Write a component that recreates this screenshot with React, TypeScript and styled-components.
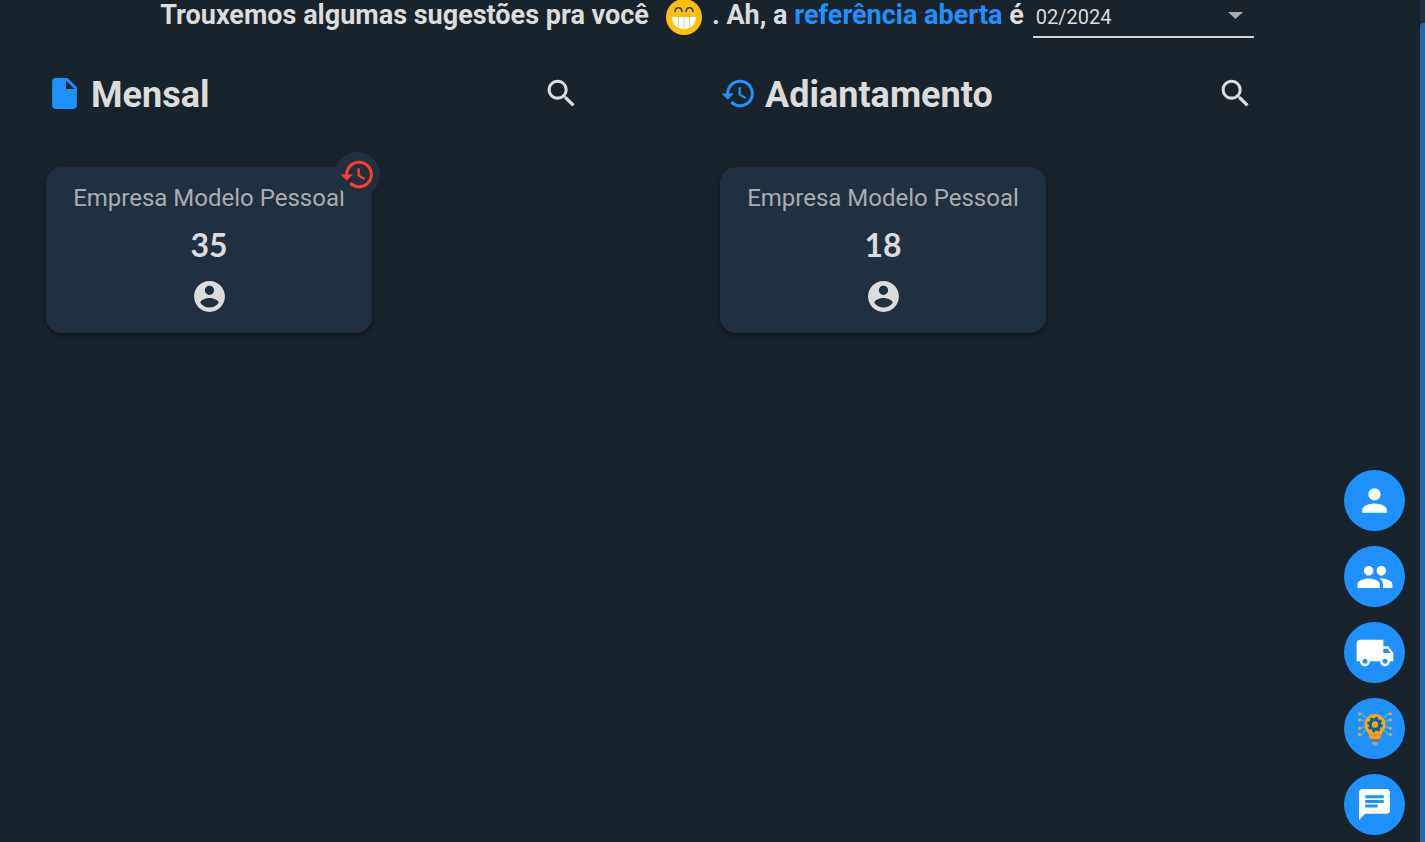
import React from 'react';
import styled, { createGlobalStyle } from 'styled-components';

const GlobalStyle = createGlobalStyle`
  *, *::before, *::after { box-sizing: border-box; }
  html, body { margin: 0; background: #19232b; }
  body { font-family: Roboto, sans-serif; color: #dcdcdc; overflow: hidden; }
  button { border: 0; padding: 0; font: inherit; cursor: pointer; }
`;

const Page = styled.div`
  min-height: 100vh;
  display: flex;
  justify-content: space-between;
`;

const Content = styled.main`
  flex: 1;
  padding: 0 36px;
`;

const ScrollTrack = styled.div`
  width: 5px;
  padding-top: 23px;
  background: #22303f;
  display: flex;
`;

const ScrollThumb = styled.div`
  flex: 1;
  border-radius: 4px 0 0 0;
  background: #2566a3;
`;

const Intro = styled.div`
  display: flex;
  justify-content: center;
  align-items: flex-start;
  gap: 9px;
  height: 38px;
  padding-left: 58px;
  padding-right: 64px;
`;

const Headline = styled.h1`
  margin: 0;
  display: flex;
  font-size: 27px;
  line-height: 30px;
  font-weight: 700;
  white-space: pre;
`;

const Accent = styled.a`
  color: #1e90ff;
  text-decoration: none;
`;

const Emoji = styled.svg`
  flex: none;
  width: 36px;
  height: 36px;
  margin: -1px 10px 0 17px;
`;

const SelectField = styled.label`
  position: relative;
  display: block;
  width: 221px;
  height: 38px;
  border-bottom: 2px solid #d0d3d4;
`;

const Select = styled.select`
  appearance: none;
  width: 100%;
  height: 34px;
  padding: 0 3px;
  border: 0;
  outline: 0;
  background: transparent;
  color: #dcdcdc;
  font: 400 20px/34px Roboto, sans-serif;
`;

const Caret = styled.svg`
  position: absolute;
  right: 11px;
  top: 12px;
  width: 15px;
  height: 7px;
  fill: #acacac;
  pointer-events: none;
`;

const Columns = styled.div`
  display: grid;
  grid-template-columns: 1fr 1fr;
  padding-top: 35px;
`;

const Column = styled.section`
  padding-left: 10px;
`;

const ColumnHeader = styled.header`
  display: flex;
  align-items: center;
  gap: 8px;
  height: 40px;
  margin-right: 130px;
`;

const ColumnTitle = styled.h2`
  flex: 1;
  margin: 0;
  padding-top: 4px;
  font-size: 36px;
  line-height: 40px;
  font-weight: 700;
`;

const IconButton = styled.button`
  display: flex;
  background: transparent;
  color: #dcdcdc;
`;

const Icon = styled.svg<{ $size?: number; $color?: string }>`
  display: block;
  flex: none;
  width: ${({ $size = 37 }) => $size}px;
  height: ${({ $size = 37 }) => $size}px;
  fill: ${({ $color = 'currentColor' }) => $color};
`;

const Card = styled.article`
  position: relative;
  width: 326px;
  height: 166px;
  margin-top: 54px;
  padding-top: 14px;
  display: flex;
  flex-direction: column;
  align-items: center;
  border-radius: 16px;
  background: #213040;
  box-shadow: 0 2px 4px rgba(0, 0, 0, 0.4);
`;

const Company = styled.h3`
  margin: 0;
  font-size: 24px;
  line-height: 34px;
  font-weight: 400;
  color: #acacac;
`;

const Count = styled.strong`
  margin: 8px 0 12px;
  font-family: Lato, sans-serif;
  font-size: 32px;
  line-height: 43px;
  font-weight: 700;
`;

const Badge = styled.span`
  position: absolute;
  right: -8px;
  top: -15px;
  width: 45px;
  height: 45px;
  display: flex;
  align-items: center;
  justify-content: center;
  border-radius: 50%;
  background: #213040;
`;

const Actions = styled.nav`
  position: fixed;
  right: 20px;
  bottom: 7px;
  display: flex;
  flex-direction: column;
  gap: 15px;
`;

const ActionButton = styled.button`
  width: 61px;
  height: 61px;
  display: flex;
  align-items: center;
  justify-content: center;
  border-radius: 50%;
  background: #1e90ff;
  color: #fff;
`;

const paths = {
  file: 'M6 2c-1.1 0-1.99.9-1.99 2L4 20c0 1.1.89 2 1.99 2H18c1.1 0 2-.9 2-2V8l-6-6H6zm7 7V3.5L18.5 9H13z',
  history:
    'M13 3c-4.97 0-9 4.03-9 9H1l3.89 3.89.07.14L9 12H6c0-3.87 3.13-7 7-7s7 3.13 7 7-3.13 7-7 7c-1.93 0-3.68-.79-4.94-2.06l-1.42 1.42C8.27 19.99 10.51 21 13 21c4.97 0 9-4.03 9-9s-4.03-9-9-9zm-1 5v5l4.28 2.54.72-1.21-3.5-2.08V8H12z',
  search:
    'M15.5 14h-.79l-.28-.27C15.41 12.59 16 11.11 16 9.5 16 5.91 13.09 3 9.5 3S3 5.91 3 9.5 5.91 16 9.5 16c1.61 0 3.09-.59 4.23-1.57l.27.28v.79l5 4.99L20.49 19l-4.99-5zm-6 0C7.01 14 5 11.99 5 9.5S7.01 5 9.5 5 14 7.01 14 9.5 11.99 14 9.5 14z',
  account:
    'M12 2C6.48 2 2 6.48 2 12s4.48 10 10 10 10-4.48 10-10S17.52 2 12 2zm0 3c1.66 0 3 1.34 3 3s-1.34 3-3 3-3-1.34-3-3 1.34-3 3-3zm0 14.2c-2.5 0-4.71-1.28-6-3.22.03-1.99 4-3.08 6-3.08 1.99 0 5.97 1.09 6 3.08-1.29 1.94-3.5 3.22-6 3.22z',
  person:
    'M12 12c2.21 0 4-1.79 4-4s-1.79-4-4-4-4 1.79-4 4 1.79 4 4 4zm0 2c-2.67 0-8 1.34-8 4v2h16v-2c0-2.66-5.33-4-8-4z',
  people:
    'M16 11c1.66 0 2.99-1.34 2.99-3S17.66 5 16 5c-1.66 0-3 1.34-3 3s1.34 3 3 3zm-8 0c1.66 0 2.99-1.34 2.99-3S9.66 5 8 5C6.34 5 5 6.34 5 8s1.34 3 3 3zm0 2c-2.33 0-7 1.17-7 3.5V19h14v-2.5c0-2.33-4.67-3.5-7-3.5zm8 0c-.29 0-.62.02-.97.05 1.16.84 1.97 1.97 1.97 3.45V19h6v-2.5c0-2.33-4.67-3.5-7-3.5z',
  truck:
    'M20 8h-3V4H3c-1.1 0-2 .9-2 2v11h2c0 1.66 1.34 3 3 3s3-1.34 3-3h6c0 1.66 1.34 3 3 3s3-1.34 3-3h2v-5l-3-4zM6 18.5c-.83 0-1.5-.67-1.5-1.5s.67-1.5 1.5-1.5 1.5.67 1.5 1.5-.67 1.5-1.5 1.5zm13.5-9l1.96 2.5H17V9.5h2.5zm-1.5 9c-.83 0-1.5-.67-1.5-1.5s.67-1.5 1.5-1.5 1.5.67 1.5 1.5-.67 1.5-1.5 1.5z',
  chat: 'M20 2H4c-1.1 0-1.99.9-1.99 2L2 22l4-4h14c1.1 0 2-.9 2-2V4c0-1.1-.9-2-2-2zM6 9h12v2H6V9zm8 5H6v-2h8v2zm4-6H6V6h12v2z',
};

type GlyphProps = { name: keyof typeof paths; size?: number; color?: string };

const Glyph = ({ name, size, color }: GlyphProps) => (
  <Icon viewBox="0 0 24 24" $size={size} $color={color} aria-hidden="true">
    <path d={paths[name]} />
  </Icon>
);

const Grin = () => (
  <Emoji viewBox="0 0 36 36" role="img" aria-label="sorriso">
    <circle cx="18" cy="18" r="18" fill="#fdbf10" />
    <path
      d="M9 12.500c.6-5 6.400-5 7 0M20 12.500c.6-5 6.400-5 7 0"
      fill="none"
      stroke="#3a3838"
      strokeWidth="1.500"
      strokeLinecap="round"
    />
    <path d="M6 18h24c0 7-5 12-12 12S6 25 6 18z" fill="#fff" />
    <path d="M12.500 18v10M18 18v12M23.500 18v10" stroke="#cfcfcf" strokeWidth="1" />
  </Emoji>
);

const sparks = [3, 9, 17.5, 23.5];

const IdeaBulb = () => (
  <Icon viewBox="0 0 36 36" $size={36} aria-hidden="true">
    <g fill="none" stroke="#5cb5c4" strokeWidth="1.400">
      <path d="M2 3h3l4 4M2 9h3l3 2M2 17h3l3-2M2 24h2l5-5M34 3h-3l-4 4M34 9h-3l-3 2M34 17h-3l-3-2M34 24h-2l-5-5" />
    </g>
    <g fill="#f9a825">
      {sparks.map((y) => (
        <g key={y}>
          <circle cx="2.500" cy={y} r="1.400" />
          <circle cx="33.500" cy={y} r="1.400" />
        </g>
      ))}
      <path d="M18 3C12 3 7.500 7.600 7.500 13.500c0 6.500 5 8 5.500 14.500h10c.5-6.500 5.500-8 5.500-14.500C28.500 7.600 24 3 18 3z" />
    </g>
    <path d="M11.500 22h13l-1.500 6H13z" fill="#f59a14" />
    <circle cx="18" cy="13.500" r="4.800" fill="none" stroke="#14618c" strokeWidth="3.200" />
    <circle cx="18" cy="13.500" r="6.800" fill="none" stroke="#14618c" strokeWidth="2" strokeDasharray="2.670 2.670" />
    <path d="M14 28h8v3h-8z" fill="#5a7f96" />
    <path d="M14.500 31h7l-1.500 3.500h-4z" fill="#8fa5b2" />
  </Icon>
);

type SuggestionProps = {
  icon: keyof typeof paths;
  title: string;
  company: string;
  count: number;
  late?: boolean;
};

const Suggestion = ({ icon, title, company, count, late }: SuggestionProps) => (
  <Column>
    <ColumnHeader>
      <Glyph name={icon} color="#1e90ff" />
      <ColumnTitle>{title}</ColumnTitle>
      <IconButton type="button" aria-label={`Pesquisar ${title}`}>
        <Glyph name="search" />
      </IconButton>
    </ColumnHeader>
    <Card>
      <Company>{company}</Company>
      <Count>{count}</Count>
      <Glyph name="account" />
      {late && (
        <Badge>
          <Glyph name="history" color="#ff3d2e" />
        </Badge>
      )}
    </Card>
  </Column>
);

export default function App() {
  return (
    <>
      <GlobalStyle />
      <Page>
        <Content>
          <Intro>
            <Headline>
              <span>Trouxemos algumas sugestões pra você</span>
              <Grin />
              <span>
                . Ah, a <Accent href="#referencia">referência aberta</Accent> é
              </span>
            </Headline>
            <SelectField>
              <Select aria-label="Referência" defaultValue="02/2024">
                <option>02/2024</option>
              </Select>
              <Caret viewBox="0 0 15 7" aria-hidden="true">
                <path d="M0 0h15L7.500 7z" />
              </Caret>
            </SelectField>
          </Intro>
          <Columns>
            <Suggestion icon="file" title="Mensal" company="Empresa Modelo Pessoal" count={35} late />
            <Suggestion icon="history" title="Adiantamento" company="Empresa Modelo Pessoal" count={18} />
          </Columns>
        </Content>
        <ScrollTrack>
          <ScrollThumb />
        </ScrollTrack>
      </Page>
      <Actions aria-label="Atalhos">
        <ActionButton type="button" aria-label="Pessoa">
          <Glyph name="person" size={37} />
        </ActionButton>
        <ActionButton type="button" aria-label="Pessoas">
          <Glyph name="people" size={38} />
        </ActionButton>
        <ActionButton type="button" aria-label="Fornecedores">
          <Glyph name="truck" size={40} />
        </ActionButton>
        <ActionButton type="button" aria-label="Ideias">
          <IdeaBulb />
        </ActionButton>
        <ActionButton type="button" aria-label="Mensagens">
          <Glyph name="chat" />
        </ActionButton>
      </Actions>
    </>
  );
}
